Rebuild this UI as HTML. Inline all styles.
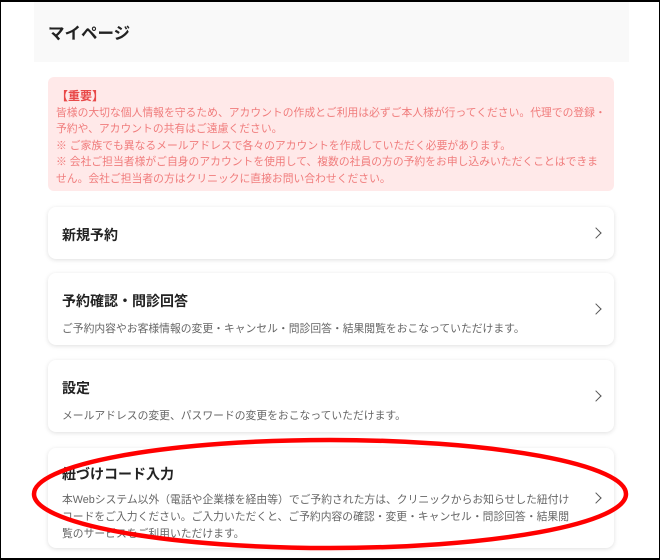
<!DOCTYPE html>
<html><head><meta charset="utf-8"><style>
*{margin:0;padding:0;box-sizing:border-box}
body{width:660px;height:560px;overflow:hidden;background:#fff;font-family:"Liberation Sans","Noto Sans CJK JP",sans-serif;position:relative}
.frame{position:absolute;left:0;top:0;width:660px;height:560px;border:1px solid #000;border-top:2px solid #000;border-bottom:2px solid #000;pointer-events:none;z-index:5}
.hdr{position:absolute;left:34px;top:0;width:595px;height:62px;background:#f9f9f9}
.hdr h1{position:absolute;left:14px;top:20px;font-size:16.5px;font-weight:bold;color:#222}
.note{position:absolute;left:48px;top:77px;width:566px;height:114px;background:#ffe9e9;border-radius:6px;padding:10px 2px 10px 8px;font-size:10.8px;line-height:16.4px;color:#f07c7c;white-space:nowrap}
.note b{color:#e84848;font-size:12px;display:block;line-height:18px}
.card{position:absolute;left:48px;width:566px;background:#fff;border-radius:8px;box-shadow:0 1px 5px rgba(0,0,0,.13);padding:0 40px 0 14px}
.card h2{font-size:14px;font-weight:bold;color:#222}
.card p{font-size:10.8px;color:#666;line-height:17px;margin-top:10px}
.chev{position:absolute;right:14px;top:50%;width:8px;height:8px;border-right:1.8px solid #555;border-top:1.8px solid #555;transform:translateY(-50%) rotate(45deg)}
</style></head><body>
<div class="hdr"><h1>マイページ</h1></div>
<div class="note"><b>【重要】</b>皆様の大切な個人情報を守るため、アカウントの作成とご利用は必ずご本人様が行ってください。代理での登録・<br>予約や、アカウントの共有はご遠慮ください。<br>※ ご家族でも異なるメールアドレスで各々のアカウントを作成していただく必要があります。<br>※ 会社ご担当者様がご自身のアカウントを使用して、複数の社員の方の予約をお申し込みいただくことはできま<br>せん。会社ご担当者の方はクリニックに直接お問い合わせください。</div>
<div class="card" style="top:207px;height:52px;padding-top:18px"><h2>新規予約</h2><span class="chev"></span></div>
<div class="card" style="top:273px;height:72px;padding-top:18px"><h2>予約確認・問診回答</h2><p>ご予約内容やお客様情報の変更・キャンセル・問診回答・結果閲覧をおこなっていただけます。</p><span class="chev"></span></div>
<div class="card" style="top:360px;height:72px;padding-top:18px"><h2>設定</h2><p>メールアドレスの変更、パスワードの変更をおこなっていただけます。</p><span class="chev"></span></div>
<div class="card" style="top:448px;height:100px;padding-top:16px"><h2>紐づけコード入力</h2><p style="margin-top:8px">本Webシステム以外（電話や企業様を経由等）でご予約された方は、クリニックからお知らせした紐付けコードをご入力ください。ご入力いただくと、ご予約内容の確認・変更・キャンセル・問診回答・結果閲覧のサービスをご利用いただけます。</p><span class="chev"></span></div>
<svg style="position:absolute;left:0;top:0;z-index:4" width="660" height="560"><ellipse cx="330" cy="494" rx="296" ry="54" fill="none" stroke="#f00" stroke-width="4.5"/></svg>
<div class="frame"></div>
</body></html>
